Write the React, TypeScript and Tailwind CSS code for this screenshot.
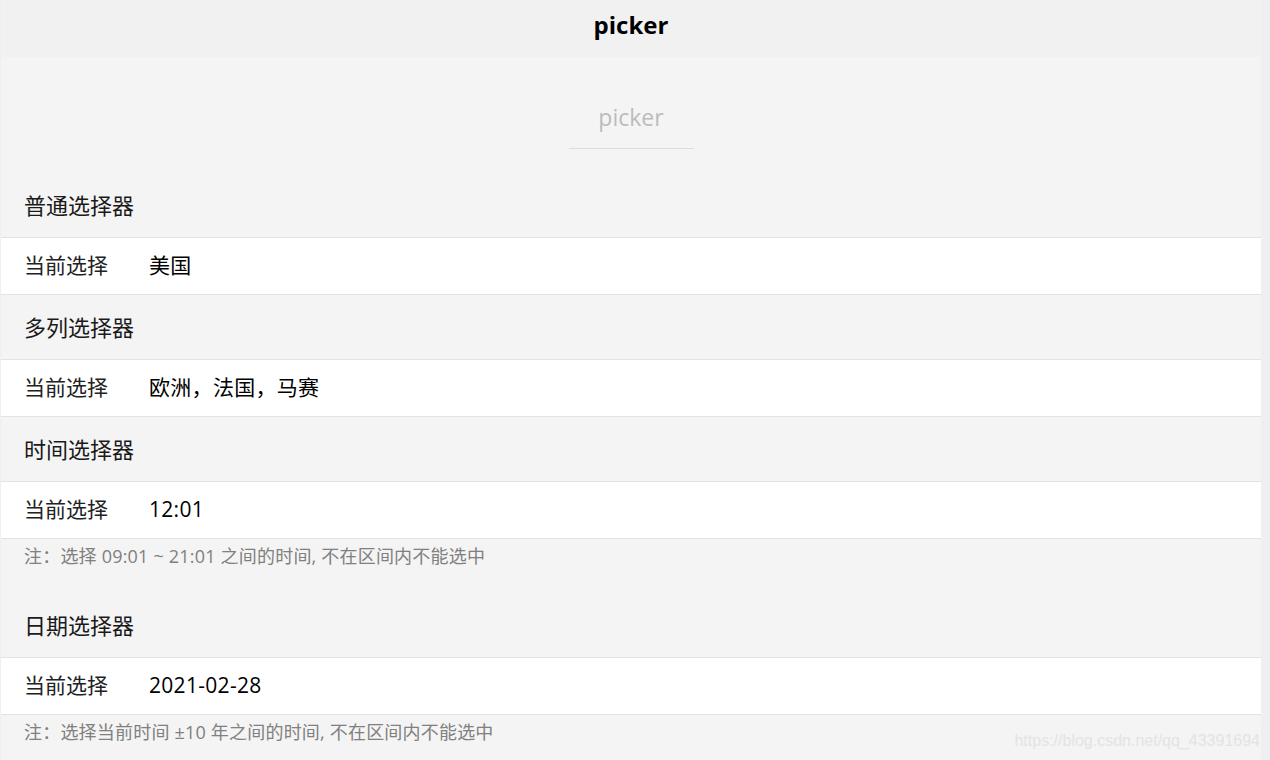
import type { ReactNode } from "react";

const font = { fontFamily: '"Open Sans", "Noto Sans CJK SC", sans-serif' };

function SectionTitle({ children, first }: { children: ReactNode; first?: boolean }) {
  return (
    <div
      className={`flex h-[64px] shrink-0 items-center px-[23px] text-[22px] text-[#1a1a1a] ${first ? "mt-[24px]" : ""}`}
    >
      {children}
    </div>
  );
}

function PickerRow({ value }: { value: string }) {
  return (
    <div className="flex h-[58px] shrink-0 items-center border-y border-[#e3e3e3] bg-white pl-[23px]">
      <div className="w-[125px] text-[21px] text-[#222]">当前选择</div>
      <div className="text-[21px] tracking-[0.3px] text-black">{value}</div>
    </div>
  );
}

function Note({ children }: { children: ReactNode }) {
  return (
    <div className="h-[54px] shrink-0 px-[23px] pt-[5px] text-[18px] leading-[24px] tracking-[0.2px] text-[#808080]">
      {children}
    </div>
  );
}

export default function App() {
  return (
    <div className="relative flex h-[760px] w-[1270px] overflow-hidden bg-[#efeff2]" style={font}>
      <div className="w-[1px] shrink-0 bg-[#efefef]" />
      <div className="flex w-[1260px] shrink-0 flex-col">
        <header className="flex h-[57px] shrink-0 items-center justify-center bg-[#f1f1f1] pb-[7px] text-[24px] font-bold text-black">
          picker
        </header>
        <main className="flex flex-1 flex-col bg-[#f4f4f4]">
          <div className="shrink-0 pt-[45px]">
            <div className="mx-auto w-[125px] border-b border-[#dcdcdc] pb-[16px] text-center text-[23px] leading-[30px] text-[#bcbcbc]">
              picker
            </div>
          </div>

          <SectionTitle first>普通选择器</SectionTitle>
          <PickerRow value="美国" />

          <SectionTitle>多列选择器</SectionTitle>
          <PickerRow value="欧洲，法国，马赛" />

          <SectionTitle>时间选择器</SectionTitle>
          <PickerRow value="12:01" />
          <Note>注：选择 09:01 ~ 21:01 之间的时间, 不在区间内不能选中</Note>

          <SectionTitle>日期选择器</SectionTitle>
          <PickerRow value="2021-02-28" />
          <Note>注：选择当前时间 ±10 年之间的时间, 不在区间内不能选中</Note>
        </main>
      </div>
      <div className="flex-1" />

      <span
        className="absolute bottom-[7px] right-[10px] text-[16px] text-[#e3e3e3]"
        style={{ fontFamily: '"Liberation Sans", Arial, sans-serif' }}
      >
        https://blog.csdn.net/qq_43391694
      </span>
    </div>
  );
}
